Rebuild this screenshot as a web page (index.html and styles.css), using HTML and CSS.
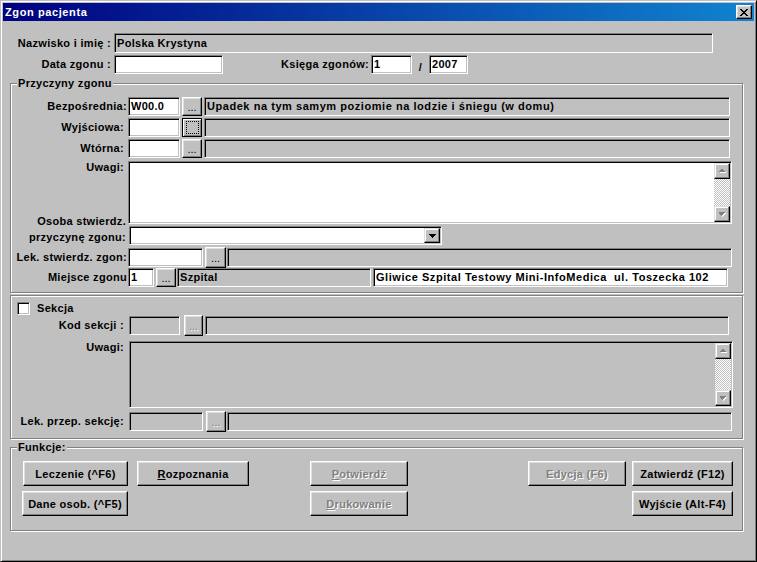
FILE: index.html
```html
<!DOCTYPE html>
<html lang="pl">
<head>
<meta charset="utf-8">
<title>Zgon pacjenta</title>
<link rel="stylesheet" href="styles.css">
</head>
<body>
<div class="window">
  <div class="titlebar">
    <span class="title">Zgon pacjenta</span>
    <span class="closebtn"><svg width="8" height="7" viewBox="0 0 8 7"><path d="M0 0h2v1H0zM6 0h2v1H6zM1 1h2v1H1zM5 1h2v1H5zM2 2h4v1H2zM3 3h2v1H3zM2 4h4v1H2zM1 5h2v1H1zM5 5h2v1H5zM0 6h2v1H0zM6 6h2v1H6z" fill="#000"/></svg></span>
  </div>
  <div class="client">
    <div class="row top1">
      <span class="lbl ltop">Nazwisko i imię :</span>
      <div class="field fname">Polska Krystyna</div>
    </div>
    <div class="row top2">
      <span class="lbl ltop">Data zgonu :</span>
      <div class="field white fdate"></div>
      <span class="lbl lksiega">Księga zgonów:</span>
      <div class="field white fnum1">1</div>
      <span class="slash">/</span>
      <div class="field white fnum2">2007</div>
    </div>

    <div class="group g1">
      <span class="legend">Przyczyny zgonu</span>
      <div class="row frow">
        <span class="lbl lg1 pr1">Bezpośrednia:</span>
        <div class="field white fcode">W00.0</div>
        <span class="dots b20">...</span>
        <div class="field fdesc wide">Upadek na tym samym poziomie na lodzie i śniegu (w domu)</div>
      </div>
      <div class="row frow mt2">
        <span class="lbl lg1">Wyjściowa:</span>
        <div class="field white fcode"></div>
        <span class="dots b20 focus"><span class="focusrect"></span></span>
        <div class="field fdesc"></div>
      </div>
      <div class="row frow mt2">
        <span class="lbl lg1">Wtórna:</span>
        <div class="field white fcode"></div>
        <span class="dots b20">...</span>
        <div class="field fdesc"></div>
      </div>
      <div class="row memorow mt3">
        <span class="lbl lg1 ltopal">Uwagi:</span>
        <div class="memo white m1">
          <div class="memotext"></div>
          <div class="vscroll">
            <span class="sbtn"><svg width="7" height="5" viewBox="0 0 7 5"><path d="M4 1h1v1h1v1h1v1H1V3h1V2h1V1z" fill="#fff"/><path d="M3 0h1v1h1v1h1v1H0V2h1V1h1V0z" fill="#808080"/></svg></span>
            <span class="track"></span>
            <span class="sbtn"><svg width="7" height="5" viewBox="0 0 7 5"><path d="M1 1h6v1H6v1H5v1H4v1H3V4H2V3H1z" fill="#fff"/><path d="M0 0h6v1H5v1H4v1H3v1H2V3H1V2H0z" fill="#808080"/></svg></span>
          </div>
        </div>
      </div>
      <div class="row frow mt2">
        <div class="lbl lg1 two">
          <span>Osoba stwierdz.</span>
          <span>przyczynę zgonu:</span>
        </div>
        <div class="field white combo">
          <span class="ddbtn"><svg width="7" height="4" viewBox="0 0 7 4"><path d="M0 0h7v1H6v1H5v1H4v1H3V3H2V2H1V1H0z" fill="#000"/></svg></span>
        </div>
      </div>
      <div class="row frow mt3">
        <span class="lbl lg1 pr1">Lek. stwierdz. zgon:</span>
        <div class="field white flek">  </div>
        <span class="dots b21 tall">...</span>
        <div class="field fdesc2"></div>
      </div>
      <div class="row frow mt1">
        <span class="lbl lg1 pr1">Miejsce zgonu</span>
        <div class="field white fmc">1</div>
        <span class="dots b20">...</span>
        <div class="field fszp">Szpital</div>
        <div class="field white fgl wide">Gliwice Szpital Testowy Mini-InfoMedica  ul. Toszecka 102</div>
      </div>
    </div>

    <div class="group g2">
      <div class="row sekrow">
        <span class="checkbox"></span>
        <span class="cblabel">Sekcja</span>
      </div>
      <div class="row frow mt1">
        <span class="lbl lg2">Kod sekcji :</span>
        <div class="field fkod"></div>
        <span class="dots dis b19 tall">...</span>
        <div class="field fkoddesc"></div>
      </div>
      <div class="row memorow mt6">
        <span class="lbl lg2 ltopal">Uwagi:</span>
        <div class="memo m2">
          <div class="memotext"></div>
          <div class="vscroll">
            <span class="sbtn"><svg width="7" height="5" viewBox="0 0 7 5"><path d="M4 1h1v1h1v1h1v1H1V3h1V2h1V1z" fill="#fff"/><path d="M3 0h1v1h1v1h1v1H0V2h1V1h1V0z" fill="#808080"/></svg></span>
            <span class="track"></span>
            <span class="sbtn"><svg width="7" height="5" viewBox="0 0 7 5"><path d="M1 1h6v1H6v1H5v1H4v1H3V4H2V3H1z" fill="#fff"/><path d="M0 0h6v1H5v1H4v1H3v1H2V3H1V2H0z" fill="#808080"/></svg></span>
          </div>
        </div>
      </div>
      <div class="row frow mt4">
        <span class="lbl lg2">Lek. przep. sekcję:</span>
        <div class="field fprz"></div>
        <span class="dots dis b20 tall">...</span>
        <div class="field fdesc2"></div>
      </div>
    </div>

    <div class="group g3">
      <span class="legend">Funkcje:</span>
      <div class="row brow">
        <span class="btn w105 ml12">Leczenie (^F6)</span>
        <span class="btn w112 ml9"><u>R</u>ozpoznania</span>
        <span class="btn dis w98 ml61"><u>P</u>otwierdź</span>
        <span class="btn dis w98 ml120">Edycja (F6)</span>
        <span class="btn w101 ml6">Zatwierdź (F12)</span>
      </div>
      <div class="row brow mt5">
        <span class="btn w106 ml11">Dane osob. (^F5)</span>
        <span class="btn dis w98 ml182"><u>D</u>rukowanie</span>
        <span class="btn w101 ml224">Wyjście (Alt-F4)</span>
      </div>
    </div>
  </div>
</div>
</body>
</html>
```

FILE: styles.css
```css
* { box-sizing: border-box; }
html, body { margin: 0; padding: 0; }
body {
  width: 757px;
  height: 562px;
  overflow: hidden;
  background: #c0c0c0;
  font-family: "Liberation Sans", Arial, sans-serif;
  font-size: 11px;
  font-weight: bold;
  letter-spacing: 0.3px;
  color: #000;
}

.window {
  width: 757px;
  height: 562px;
  background: #c0c0c0;
  border: 1px solid;
  border-color: #c0c0c0 #000 #000 #c0c0c0;
  box-shadow: inset 1px 1px #fff, inset -1px -1px #808080;
  padding: 2px;
  display: flex;
  flex-direction: column;
}

.titlebar {
  height: 18px;
  flex: none;
  background: linear-gradient(to right, #000080, #1084d0);
  display: flex;
  align-items: center;
  justify-content: space-between;
  padding: 0 2px 0 2px;
}
.title { color: #fff; letter-spacing: 0.6px; font-size: 11px; }
.closebtn {
  width: 16px;
  height: 14px;
  background: #c0c0c0;
  border: 1px solid;
  border-color: #fff #000 #000 #fff;
  box-shadow: inset -1px -1px #808080, inset 1px 1px #dfdfdf;
  display: flex;
  align-items: center;
  justify-content: center;
}
.closebtn svg { display: block; margin-left: -1px; }

.client {
  flex: 1;
  padding-left: 7px;
  display: flex;
  flex-direction: column;
}

.row { display: flex; align-items: center; flex: none; }
.lbl { text-align: right; white-space: nowrap; flex: none; line-height: 13px; }

.field {
  height: 19px;
  border: 1px solid;
  border-color: #808080 #fff #fff #808080;
  box-shadow: inset 1px 1px #000, inset -1px -1px #c0c0c0;
  background: #c0c0c0;
  padding: 0 2px;
  line-height: 17px;
  white-space: pre;
  overflow: hidden;
  flex: none;
}
.field.white { background: #fff; }
.field.wide { letter-spacing: 0.55px; }

.mt1 { margin-top: 1px; }
.mt2 { margin-top: 2px; }
.mt3 { margin-top: 3px; }
.mt4 { margin-top: 4px; }
.mt5 { margin-top: 5px; }
.mt6 { margin-top: 6px; }

/* top rows */
.top1 { margin-top: 12px; height: 20px; }
.ltop { width: 101px; margin-right: 3px; }
.fname { width: 599px; height: 20px; line-height: 18px; }
.top2 { margin-top: 2px; height: 19px; }
.fdate { width: 109px; }
.lksiega { width: 146px; margin-right: 2px; }
.fnum1 { width: 41px; }
.slash { width: 17px; text-align: center; padding-top: 4px; }
.fnum2 { width: 39px; }

/* group boxes */
.group {
  position: relative;
  width: 733px;
  border: 1px solid #808080;
  box-shadow: inset 1px 1px #fff, 1px 1px #fff;
  flex: none;
}
.legend {
  position: absolute;
  top: -7px;
  left: 6px;
  padding: 0 1px;
  background: #c0c0c0;
  line-height: 13px;
}
.g1 { margin-top: 9px; height: 210px; padding-top: 13px; }
.g2 { margin-top: 2px; height: 144px; padding-top: 6px; }
.g3 { margin-top: 8px; height: 84px; padding-top: 13px; }

.frow { height: 19px; }
.lg1 { width: 117px; padding-right: 4px; }
.lg2 { width: 118px; padding-right: 5px; }
.pr1 { padding-right: 1px; }
.ltopal { align-self: flex-start; }

.fcode { width: 52px; margin-right: 2px; }
.fdesc { width: 526px; margin-left: 2px; }
.fdesc2 { width: 505px; margin-left: 1px; }

/* small "..." buttons */
.dots {
  height: 19px;
  flex: none;
  background: #c0c0c0;
  border: 1px solid;
  border-color: #fff #000 #000 #fff;
  box-shadow: inset -1px -1px #808080, inset 1px 1px #dfdfdf;
  display: flex;
  align-items: center;
  justify-content: center;
  letter-spacing: 0;
  font-weight: normal;
  line-height: 13px;
  padding-top: 1px;
}
.dots.tall { height: 21px; }
.dots.dis { color: #808080; text-shadow: 1px 1px 0 #fff; }
.b19 { width: 19px; }
.b20 { width: 20px; }
.b21 { width: 21px; }
.dots.focus {
  border-color: #000;
  box-shadow: inset 1px 1px #fff, inset -1px -1px #808080;
  padding: 0;
}
.focusrect {
  width: 13px;
  height: 13px;
  border: 1px dotted #000;
}

/* memo */
.memorow { align-items: flex-start; }
.memo {
  display: flex;
  flex: none;
  border: 1px solid;
  border-color: #808080 #fff #fff #808080;
  box-shadow: inset 1px 1px #000, inset -1px -1px #c0c0c0;
  background: #c0c0c0;
  padding: 1px;
}
.memo.white { background: #fff; }
.m1 { width: 604px; height: 63px; }
.m2 { width: 604px; height: 67px; }
.memotext { flex: 1; }
.vscroll {
  width: 16px;
  flex: none;
  display: flex;
  flex-direction: column;
  background: repeating-conic-gradient(#fff 0 25%, #c0c0c0 0 50%) 0 0 / 2px 2px;
}
.sbtn {
  width: 16px;
  height: 16px;
  flex: none;
  background: #c0c0c0;
  border: 1px solid;
  border-color: #dfdfdf #000 #000 #dfdfdf;
  box-shadow: inset -1px -1px #808080, inset 1px 1px #fff;
  display: flex;
  align-items: center;
  justify-content: center;
}
.sbtn svg { display: block; }
.track { flex: 1; }

/* combo */
.combo {
  width: 313px;
  display: flex;
  justify-content: flex-end;
  align-items: center;
  padding: 0 1px 0 0;
  margin-left: 1px;
}
.ddbtn {
  width: 16px;
  height: 15px;
  background: #c0c0c0;
  border: 1px solid;
  border-color: #dfdfdf #000 #000 #dfdfdf;
  box-shadow: inset -1px -1px #808080, inset 1px 1px #fff;
  display: flex;
  align-items: center;
  justify-content: center;
}
.ddbtn svg { display: block; }
.two {
  height: 19px;
  display: flex;
  flex-direction: column;
  justify-content: flex-end;
  align-items: flex-end;
  line-height: 16px;
  padding-right: 2px;
}

.flek { width: 75px; margin-right: 2px; }
.fmc { width: 26px; margin-right: 2px; }
.fszp { width: 194px; margin-left: 1px; margin-right: 2px; }
.fgl { width: 355px; }

/* sekcja */
.sekrow { height: 13px; }
.checkbox {
  width: 13px;
  height: 13px;
  margin-left: 6px;
  background: #fff;
  border: 1px solid;
  border-color: #808080 #fff #fff #808080;
  box-shadow: inset 1px 1px #000, inset -1px -1px #c0c0c0;
}
.cblabel { margin-left: 7px; line-height: 13px; }
.fkod { width: 51px; margin-right: 4px; }
.fkoddesc { width: 524px; margin-left: 2px; }
.fprz { width: 74px; margin-right: 3px; }

/* function buttons */
.brow { height: 25px; }
.btn {
  height: 25px;
  flex: none;
  background: #c0c0c0;
  border: 1px solid;
  border-color: #fff #000 #000 #fff;
  box-shadow: inset -1px -1px #808080, inset 1px 1px #dfdfdf;
  display: flex;
  align-items: center;
  justify-content: center;
  white-space: nowrap;
}
.btn.dis { color: #808080; text-shadow: 1px 1px 0 #fff; }
.btn u { text-decoration: underline; text-underline-offset: 1px; }
.w98 { width: 98px; }
.w101 { width: 101px; }
.w105 { width: 105px; }
.w106 { width: 106px; }
.w112 { width: 112px; }
.ml6 { margin-left: 6px; }
.ml9 { margin-left: 9px; }
.ml11 { margin-left: 11px; }
.ml12 { margin-left: 12px; }
.ml61 { margin-left: 61px; }
.ml120 { margin-left: 120px; }
.ml182 { margin-left: 182px; }
.ml224 { margin-left: 224px; }
```
